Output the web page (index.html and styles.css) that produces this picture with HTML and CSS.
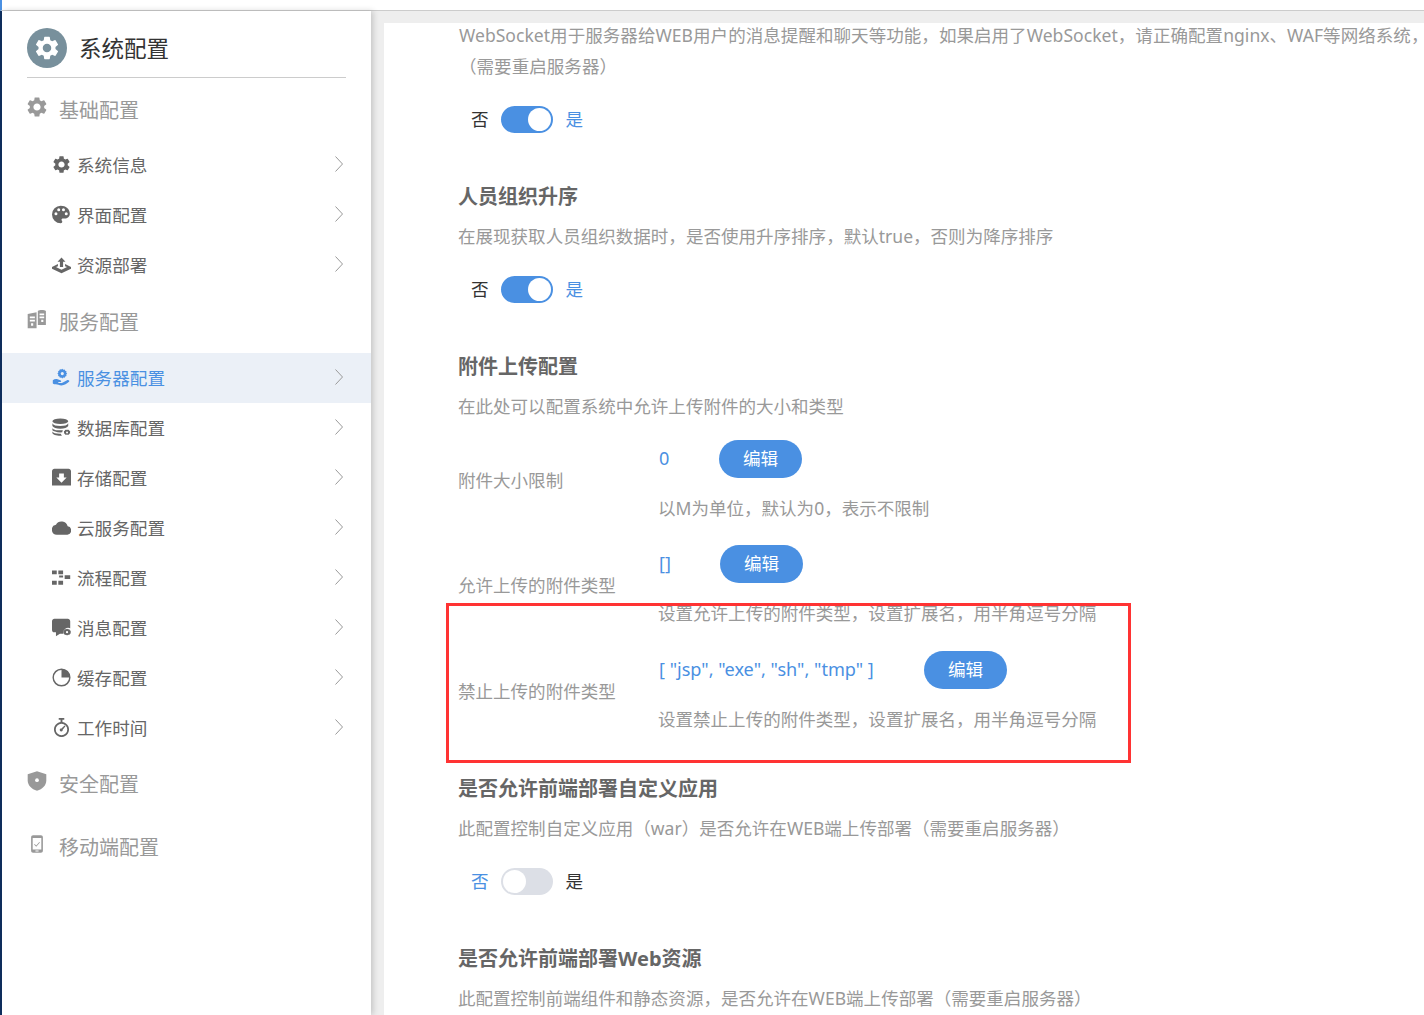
FILE: index.html
```html
<!DOCTYPE html>
<html lang="zh-CN">
<head>
<meta charset="utf-8">
<title>系统配置</title>
<link rel="stylesheet" href="styles.css">
</head>
<body>
<svg class="defs" aria-hidden="true">
  <symbol id="gear" viewBox="1 1 22 22"><path fill-rule="evenodd" d="M19.14 12.94c.04-.3.06-.61.06-.94 0-.32-.02-.64-.07-.94l2.03-1.58a.49.49 0 0 0 .12-.61l-1.92-3.32a.488.488 0 0 0-.59-.22l-2.39.96c-.5-.38-1.03-.7-1.62-.94l-.36-2.54a.484.484 0 0 0-.48-.41h-3.84c-.24 0-.43.17-.47.41l-.36 2.54c-.59.24-1.13.57-1.62.94l-2.39-.96c-.22-.08-.47 0-.59.22L2.74 8.87c-.12.21-.08.47.12.61l2.03 1.58c-.05.3-.09.63-.09.94s.02.64.07.94l-2.03 1.58a.49.49 0 0 0-.12.61l1.92 3.32c.12.22.37.29.59.22l2.39-.96c.5.38 1.03.7 1.62.94l.36 2.54c.05.24.24.41.48.41h3.84c.24 0 .44-.17.47-.41l.36-2.54c.59-.24 1.13-.56 1.62-.94l2.39.96c.22.08.47 0 .59-.22l1.92-3.32c.12-.22.07-.47-.12-.61l-2.01-1.58zM12 15.6c-1.98 0-3.6-1.62-3.6-3.6s1.62-3.6 3.6-3.6 3.6 1.62 3.6 3.6-1.62 3.6-3.6 3.6z"/></symbol>
  <symbol id="palette" viewBox="0 0 24 24"><path fill-rule="evenodd" d="M11 1a11 11 0 0 0 0 22c1.300 0 2-.8 2-1.800 0-.5-.2-.9-.5-1.300-.3-.3-.5-.7-.5-1.200 0-1 .8-1.700 1.800-1.700H16c3.500 0 6.500-2.500 6.500-6C22.500 5 17.500 1 11 1zM5 13a1.900 1.900 0 1 1 0-3.800A1.900 1.900 0 0 1 5 13zm3.500-5a1.900 1.900 0 1 1 0-3.800 1.900 1.900 0 0 1 0 3.800zm6 0a1.900 1.900 0 1 1 0-3.800 1.900 1.900 0 0 1 0 3.800zm3.500 5a1.900 1.900 0 1 1 0-3.800 1.900 1.900 0 0 1 0 3.800z"/></symbol>
  <symbol id="deploy" viewBox="0 0 24 24"><path d="M12 3l5 5.500h-3v6.500h-4V8.500H7z"/><path d="M0 15l7.500-3.500v2.700L5 15.300l7 3.200 7-3.200-2.500-1.100v-2.700L24 15v2.500L12 23 0 17.500z"/></symbol>
  <symbol id="server" viewBox="0 0 24 24"><path fill-rule="evenodd" d="M13 1l1.300 1.200 1.700-.3.700 1.600 1.600.7-.3 1.700L19.200 7 18 8.300l.3 1.700-1.600.7-.7 1.600-1.700-.3L13 13.200 11.700 12l-1.700.3-.7-1.600-1.600-.7.3-1.700L6.800 7 8 5.700l-.3-1.700 1.600-.7.700-1.600 1.700.3zM13 5a2 2 0 1 0 0 4 2 2 0 0 0 0-4z"/><path d="M1 15.500c2-1.500 4-2 6-1.200l3.500 1.200c1.500.5 1.500 2 .2 2.300H8v1h4.500l6.500-3.300c1.700-.8 3.800.8 2.500 2-2.500 2.300-6 4.500-9.500 4.500-3 0-5-1.500-7-1.500H3c-1.300 0-2-.7-2-1.500z"/></symbol>
  <symbol id="database" viewBox="0 0 24 24"><ellipse cx="10.500" cy="4" rx="10" ry="3.500"/><path d="M.5 6.500c1 2.500 5 3.500 10 3.500s9-1 10-3.500V10c-1 2-5 3.500-10 3.500S1.500 12 .5 10z"/><path d="M.5 12.500c1 2.500 5 3 10 3 1 0 2 0 3-.2l-.5 2.700-2.500.2c-5 0-9-1.700-10-2.700z"/><path d="M.5 17c1 2 5 3 10.500 2.800l1.500 2.700h-2C5.500 22.500.5 21 .5 19z"/><path fill-rule="evenodd" d="M19 14.500l1 .6 1.300-.3.600 1.200 1.100.6-.3 1.300.3 1.300-1.100.6-.6 1.200-1.300-.3-1 .8-1-.8-1.300.3-.6-1.200-1.100-.6.3-1.300-.3-1.300 1.100-.6.6-1.200 1.300.3zm0 2.500a1 1 0 1 0 0 2.500 1 1 0 0 0 0-2.500z"/></symbol>
  <symbol id="storage" viewBox="0 0 24 24"><path fill-rule="evenodd" d="M3 1h18c1.500 0 3 1.500 3 3v18H0V4c0-1.500 1.500-3 3-3zM9 7v5H5.500L12 18.500 18.500 12H15V7z"/></symbol>
  <symbol id="cloud" viewBox="0 0 24 24"><path d="M19.800 10.500A8 8 0 0 0 5 8.500 6.300 6.300 0 0 0 6 21h13.500a5.300 5.300 0 0 0 .3-10.500z"/></symbol>
  <symbol id="flow" viewBox="0 0 24 24"><path d="M0 3h6v5H0zM8 3h6v5H8zM16 9h7v5h-7zM0 16h6v5H0zM8 16h6v5H8zM9 9.500h5v2.500H9z"/></symbol>
  <symbol id="message" viewBox="0 0 24 24"><path d="M3 1h17c1.500 0 3 1.200 3 3v9a6.500 6.500 0 0 0-9 7H10l-5 3v-5H3c-2 0-3-1.500-3-3V4c0-1.800 1.500-3 3-3z"/><path fill-rule="evenodd" d="M19 13.500l1.300.8 1.500-.2.700 1.400 1.300.8-.3 1.500.3 1.500-1.300.8-.7 1.400-1.500-.2-1.300.9-1.300-.9-1.500.2-.7-1.400-1.300-.8.3-1.500-.3-1.500 1.300-.8.7-1.400 1.500.2zm0 3a1.300 1.300 0 1 0 0 2.800 1.300 1.300 0 0 0 0-2.800z"/></symbol>
  <symbol id="pie" viewBox="0 0 24 24"><circle cx="12" cy="12" r="10.500" fill="none" stroke="currentColor" stroke-width="1.800"/><path d="M12 1.500A10.500 10.500 0 0 1 22.500 12H12z"/></symbol>
  <symbol id="timer" viewBox="0 0 24 24"><path fill-rule="evenodd" d="M8.500 0h7v2.200h-2.300v2.900a9.500 9.500 0 1 1-2.400 0V2.200H8.500zM12 7.200a7.300 7.300 0 1 0 0 14.600 7.300 7.300 0 0 0 0-14.600z"/><path d="M17 10.500l-3.500 4.200a1.900 1.900 0 1 1-1.500-1.500l3.800-3.700z"/></symbol>
  <symbol id="services" viewBox="-1 -1 26 26"><path fill-rule="evenodd" d="M1 6l10.500-2v19H1zM3.500 9v2h6V9zm0 4v2h6v-2zm1.500 4v3h2.500v-3z"/><path fill-rule="evenodd" d="M13 2.500C15 1 20.500 1 22.500 2.500V19H13zM15 5.500v2h5.500v-2zm0 3.500v2h5.500V9zm2 4v2.500h2.500V13z"/></symbol>
  <symbol id="shield" viewBox="-1 -1 26 26"><path d="M12 .500l11 3.500v7.500c0 5.500-4.500 10.500-11 12C5.500 22 1 17 1 11.500V4z"/><circle cx="12" cy="11" r="2.200" fill="#fff"/></symbol>
  <symbol id="mobile" viewBox="-2 -2 28 28"><path fill-rule="evenodd" d="M7 1h10c1.500 0 2.500 1 2.500 2.500v17c0 1.500-1 2.500-2.500 2.500H7c-1.500 0-2.500-1-2.500-2.500v-17C4.500 2 5.500 1 7 1zm-.5 3.500v14.500h11V4.500zM10 20.200v1.300h4v-1.300z"/><path d="M9 12l2 2 4-4.500.7.700L11 15.500 8.300 12.700z"/></symbol>
  <symbol id="chev" viewBox="0 0 8 16"><path d="M.5.500L7.500 8 .5 15.500" fill="none" stroke="currentColor" stroke-width="1"/></symbol>
</svg>

<header class="topbar"></header>

<div class="workspace">
  <aside class="sidebar">
    <div class="brand">
      <span class="brand-badge"><svg class="brand-icon"><use href="#gear"/></svg></span>
      <span class="brand-title">系统配置</span>
    </div>

    <div class="group"><svg class="group-icon"><use href="#gear"/></svg><span>基础配置</span></div>
    <a class="item"><svg class="item-icon"><use href="#gear"/></svg><span class="item-label">系统信息</span><svg class="chev"><use href="#chev"/></svg></a>
    <a class="item"><svg class="item-icon"><use href="#palette"/></svg><span class="item-label">界面配置</span><svg class="chev"><use href="#chev"/></svg></a>
    <a class="item"><svg class="item-icon"><use href="#deploy"/></svg><span class="item-label">资源部署</span><svg class="chev"><use href="#chev"/></svg></a>

    <div class="group group-wide"><svg class="group-icon"><use href="#services"/></svg><span>服务配置</span></div>
    <a class="item active"><svg class="item-icon"><use href="#server"/></svg><span class="item-label">服务器配置</span><svg class="chev"><use href="#chev"/></svg></a>
    <a class="item"><svg class="item-icon"><use href="#database"/></svg><span class="item-label">数据库配置</span><svg class="chev"><use href="#chev"/></svg></a>
    <a class="item"><svg class="item-icon"><use href="#storage"/></svg><span class="item-label">存储配置</span><svg class="chev"><use href="#chev"/></svg></a>
    <a class="item"><svg class="item-icon"><use href="#cloud"/></svg><span class="item-label">云服务配置</span><svg class="chev"><use href="#chev"/></svg></a>
    <a class="item"><svg class="item-icon"><use href="#flow"/></svg><span class="item-label">流程配置</span><svg class="chev"><use href="#chev"/></svg></a>
    <a class="item"><svg class="item-icon"><use href="#message"/></svg><span class="item-label">消息配置</span><svg class="chev"><use href="#chev"/></svg></a>
    <a class="item"><svg class="item-icon"><use href="#pie"/></svg><span class="item-label">缓存配置</span><svg class="chev"><use href="#chev"/></svg></a>
    <a class="item"><svg class="item-icon"><use href="#timer"/></svg><span class="item-label">工作时间</span><svg class="chev"><use href="#chev"/></svg></a>

    <div class="group group-raised"><svg class="group-icon"><use href="#shield"/></svg><span>安全配置</span></div>
    <div class="group"><svg class="group-icon"><use href="#mobile"/></svg><span>移动端配置</span></div>
  </aside>

  <main class="panel">
    <div class="scroll">
      <section class="section first">
        <p class="desc lead">WebSocket用于服务器给WEB用户的消息提醒和聊天等功能，如果启用了WebSocket，请正确配置nginx、WAF等网络系统，（需要重启服务器）</p>
        <div class="switch-row">
          <span class="opt dark">否</span><span class="switch on"><i class="knob"></i></span><span class="opt blue">是</span>
        </div>
      </section>

      <section class="section">
        <h3 class="title">人员组织升序</h3>
        <p class="desc">在展现获取人员组织数据时，是否使用升序排序，默认true，否则为降序排序</p>
        <div class="switch-row">
          <span class="opt dark">否</span><span class="switch on"><i class="knob"></i></span><span class="opt blue">是</span>
        </div>
      </section>

      <section class="section upload">
        <h3 class="title">附件上传配置</h3>
        <p class="desc">在此处可以配置系统中允许上传附件的大小和类型</p>
        <div class="field">
          <label class="field-label">附件大小限制</label>
          <div class="field-body">
            <div class="value-line"><span class="value w-size">0</span><button class="edit">编辑</button></div>
            <p class="desc hint">以M为单位，默认为0，表示不限制</p>
          </div>
        </div>
        <div class="field">
          <label class="field-label">允许上传的附件类型</label>
          <div class="field-body">
            <div class="value-line"><span class="value w-allow">[]</span><button class="edit">编辑</button></div>
            <p class="desc hint">设置允许上传的附件类型，设置扩展名，用半角逗号分隔</p>
          </div>
        </div>
        <div class="field">
          <label class="field-label">禁止上传的附件类型</label>
          <div class="field-body">
            <div class="value-line"><span class="value w-deny">[ "jsp", "exe", "sh", "tmp" ]</span><button class="edit">编辑</button></div>
            <p class="desc hint">设置禁止上传的附件类型，设置扩展名，用半角逗号分隔</p>
          </div>
        </div>
      </section>

      <section class="section">
        <h3 class="title">是否允许前端部署自定义应用</h3>
        <p class="desc">此配置控制自定义应用（war）是否允许在WEB端上传部署（需要重启服务器）</p>
        <div class="switch-row">
          <span class="opt blue">否</span><span class="switch off"><i class="knob"></i></span><span class="opt dark">是</span>
        </div>
      </section>

      <section class="section">
        <h3 class="title">是否允许前端部署Web资源</h3>
        <p class="desc">此配置控制前端组件和静态资源，是否允许在WEB端上传部署（需要重启服务器）</p>
      </section>
    </div>
  </main>
</div>

<div class="annotation"></div>
</body>
</html>
```

FILE: styles.css
```css
* { box-sizing: border-box; }
html, body { height: 100%; }
body {
  margin: 0;
  height: 1015px;
  overflow: hidden;
  background: #eee;
  font-family: "Noto Sans", "Noto Sans CJK SC", sans-serif;
  font-size: 17.6px;
  color: #666;
  display: flex;
  flex-direction: column;
}
.defs { position: absolute; width: 0; height: 0; }

.topbar {
  height: 11px;
  flex: none;
  background: #fff;
  border-left: 2px solid #4a90e2;
  border-bottom: 1px solid #ccc;
}

.workspace {
  flex: 1;
  min-height: 0;
  display: flex;
  border-left: 2px solid #0f2f5f;
}

/* sidebar */
.sidebar {
  width: 369px;
  flex: none;
  background: #fff;
  box-shadow: 2px 0 6px rgba(0, 0, 0, .18);
}
.brand {
  height: 67px;
  margin: 0 25px;
  padding-top: 17px;
  border-bottom: 1px solid #ccc;
  display: flex;
  align-items: flex-start;
  gap: 12px;
}
.brand-badge {
  width: 40px;
  height: 40px;
  border-radius: 50%;
  background: #78909c;
  display: flex;
  align-items: center;
  justify-content: center;
}
.brand-icon { width: 26px; height: 26px; fill: #fff; }
.brand-title { font-size: 22.5px; line-height: 42px; color: #333; }

.group {
  height: 62px;
  padding-left: 24px;
  display: flex;
  align-items: center;
  font-size: 20px;
  color: #999;
}
.group-wide { margin-bottom: 1px; }
.group-raised { padding-bottom: 2px; }
.group-icon { width: 22px; height: 22px; fill: #999; color: #999; margin-right: 11px; flex: none; position: relative; top: -2px; }

.item {
  height: 50px;
  padding: 0 28px 0 50px;
  display: flex;
  align-items: center;
  color: #666;
}
.item-icon { width: 19px; height: 19px; fill: #666; color: #666; margin-right: 6px; flex: none; position: relative; top: -1px; }
.item-label { flex: 1; position: relative; top: -1px; }
.chev { width: 8px; height: 16px; color: #999; position: relative; top: -1px; }
.item.active { background: #ebf0f7; color: #4a90e2; }
.item.active .item-icon { fill: #4a90e2; }

/* main */
.panel {
  flex: 1;
  min-width: 0;
  margin: 12px 0 0 13px;
  background: #fff;
  overflow: hidden;
}
.scroll { width: 1080px; margin-top: -3px; padding-left: 74px; }

.section { padding-bottom: 48px; }
.title { margin: 0 0 8px; font-size: 20px; line-height: 32px; font-weight: 700; color: #666; }
.desc { margin: 0; font-size: 17.55px; line-height: 31px; color: #999; }
.lead { width: 977px; padding-left: 1px; letter-spacing: .03px; }

.switch-row { display: flex; align-items: center; height: 27px; margin-top: 24px; padding-left: 13px; }
.opt { line-height: 27px; }
.opt.dark { color: #333; }
.opt.blue { color: #4a90e2; }
.switch {
  width: 52px;
  height: 27px;
  margin: 0 13px 0 12px;
  border-radius: 14px;
  padding: 2px;
  display: flex;
}
.switch.on { background: #4a90e2; justify-content: flex-end; }
.switch.off { background: #dcdfe6; justify-content: flex-start; }
.knob { width: 23px; height: 23px; border-radius: 50%; background: #fff; }

.upload { padding-bottom: 38px; }
.field { display: flex; align-items: center; margin-top: 18px; }
.field + .field { margin-top: 21px; }
.field + .field:last-child { margin-top: 22px; }
.field-label { width: 200px; flex: none; font-size: 17.55px; color: #999; line-height: 24px; padding-bottom: 4px; }
.value-line { display: flex; align-items: center; height: 38px; }
.value { color: #4a90e2; white-space: nowrap; font-size: 18.1px; position: relative; top: -1px; margin-left: 1px; }
.w-size { width: 59px; margin-right: 1px; }
.w-allow { width: 60px; margin-right: 1px; }
.w-deny { width: 264px; margin-right: 1px; }
.edit {
  width: 83px;
  height: 38px;
  border: 0;
  border-radius: 19px;
  background: #4a90e2;
  color: #fff;
  font: inherit;
  padding: 0 0 3px;
}
.hint { margin-top: 15px; }

.annotation {
  position: absolute;
  left: 446px;
  top: 603px;
  width: 685px;
  height: 160px;
  border: 3px solid #f33;
}
```
